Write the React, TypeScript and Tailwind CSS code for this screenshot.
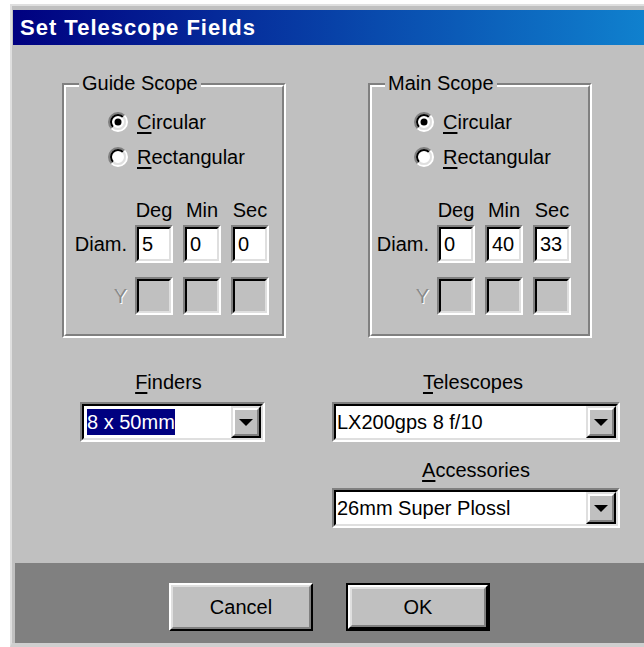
import React from "react";

function Radio({ checked }: { checked: boolean }) {
  return (
    <svg width="20" height="20" viewBox="0 0 20 20" className="shrink-0">
      <circle cx="10" cy="10" r="8" fill="#ffffff" />
      <path d="M3.636 16.364A9 9 0 0 1 16.364 3.636" fill="none" stroke="#808080" strokeWidth="2" />
      <path d="M16.364 3.636A9 9 0 0 1 3.636 16.364" fill="none" stroke="#ffffff" strokeWidth="2" />
      <path d="M5.05 14.95A7 7 0 0 1 14.95 5.05" fill="none" stroke="#000000" strokeWidth="2" />
      <path d="M14.95 5.05A7 7 0 0 1 5.05 14.95" fill="none" stroke="#dfdfdf" strokeWidth="2" />
      {checked && <circle cx="10" cy="10" r="3.5" fill="#000000" />}
    </svg>
  );
}

function Field({ value, disabled }: { value?: string; disabled?: boolean }) {
  return (
    <div className="w-[38px] h-[38px] border-2 border-t-[#808080] border-l-[#808080] border-r-white border-b-white">
      <div
        className={`h-full border-2 border-t-black border-l-black border-r-[#dfdfdf] border-b-[#dfdfdf] pl-[3px] leading-[30px] ${
          disabled ? "bg-[#c0c0c0]" : "bg-white"
        }`}
      >
        {value}
      </div>
    </div>
  );
}

function DropButton() {
  return (
    <div className="w-[30px] h-full shrink-0 border-2 border-t-[#dfdfdf] border-l-[#dfdfdf] border-r-black border-b-black">
      <div className="h-full flex items-center justify-center bg-[#c0c0c0] border-2 border-t-white border-l-white border-r-[#808080] border-b-[#808080]">
        <svg width="14" height="7" viewBox="0 0 14 7">
          <path d="M0 0H14L7 7Z" fill="#000000" />
        </svg>
      </div>
    </div>
  );
}

function Combo({ value, selected }: { value: string; selected?: boolean }) {
  return (
    <div className="h-[40px] border-2 border-t-[#808080] border-l-[#808080] border-r-white border-b-white">
      <div className="h-full flex bg-white border-2 border-t-black border-l-black border-r-[#dfdfdf] border-b-[#dfdfdf]">
        <div className={`flex-1 flex items-center ${selected ? "pl-[3px]" : "pl-[1px]"}`}>
          {selected ? (
            <span className="bg-[#000080] text-white leading-[26px]">{value}</span>
          ) : (
            <span>{value}</span>
          )}
        </div>
        <DropButton />
      </div>
    </div>
  );
}

function Underlined({ first, rest }: { first: string; rest: string }) {
  return (
    <span>
      <span className="underline decoration-2 underline-offset-[3px]">{first}</span>
      {rest}
    </span>
  );
}

function ScopeGroup({
  title,
  values,
  shift,
}: {
  title: string;
  values: string[];
  shift: "guide" | "main";
}) {
  return (
    <div className="relative w-[224px] h-[255px] border-2 border-t-[#808080] border-l-[#808080] border-r-white border-b-white">
      <div className="h-full pt-[20px] border-2 border-t-white border-l-white border-r-[#808080] border-b-[#808080]">
        <div className="flex items-center h-[30px] pl-[42px] gap-[9px]">
          <Radio checked />
          <Underlined first="C" rest="ircular" />
        </div>
        <div className="flex items-center h-[30px] mt-[5px] pl-[42px] gap-[9px]">
          <Radio checked={false} />
          <Underlined first="R" rest="ectangular" />
        </div>

        <div className={`mt-[26px] ${shift === "guide" ? "pl-[5px]" : "pl-[1px]"}`}>
          <div className="flex h-[24px]">
            <div className="w-[64px] shrink-0" />
            <div className="flex gap-[10px]">
              <div className="w-[38px] text-center">Deg</div>
              <div className="w-[38px] text-center">Min</div>
              <div className="w-[38px] text-center">Sec</div>
            </div>
          </div>
          <div className="flex items-center mt-[3px]">
            <div className="w-[64px] shrink-0 pr-[8px] text-right">Diam.</div>
            <div className="flex gap-[10px]">
              {values.map((v, i) => (
                <Field key={i} value={v} />
              ))}
            </div>
          </div>
          <div className="flex items-center mt-[14px]">
            <div className="w-[64px] shrink-0 pr-[8px] text-right text-[#8a8a8a] [text-shadow:1px_1px_0_#ffffff]">
              Y
            </div>
            <div className="flex gap-[10px]">
              <Field disabled />
              <Field disabled />
              <Field disabled />
            </div>
          </div>
        </div>
      </div>
      <span className="absolute -top-[14px] left-[15px] px-[3px] leading-[24px] bg-[#c0c0c0]">{title}</span>
    </div>
  );
}

function PushButton({ label, isDefault }: { label: string; isDefault?: boolean }) {
  return (
    <div className={`w-[144px] h-[48px] ${isDefault ? "border-2 border-black" : ""}`}>
      <div className="h-full border-2 border-t-white border-l-white border-r-black border-b-black">
        <div className="h-full flex items-center justify-center bg-[#c0c0c0] border-2 border-t-[#dfdfdf] border-l-[#dfdfdf] border-r-[#808080] border-b-[#808080]">
          {label}
        </div>
      </div>
    </div>
  );
}

export default function App() {
  return (
    <div className="w-[644px] h-[647px] overflow-hidden bg-white text-black font-['Liberation_Sans',Arial,sans-serif]">
      <div className="ml-[10px] mt-[4px] w-[650px] h-[643px] flex flex-col bg-[#c0c0c0] border-l-2 border-t-2 border-b-4 border-l-[#dfdfdf] border-t-[#dfdfdf] border-b-[#cfcfcf] pl-px pt-[4px]">
        {/* title bar */}
        <div className="h-[35px] shrink-0 flex items-center pl-[7px] text-white font-bold text-[22px] tracking-[1px] bg-[linear-gradient(to_right,#000080,#1084d0)]">
          Set Telescope Fields
        </div>

        {/* dialog body */}
        <div className="h-[518px] shrink-0 text-[20px] leading-[24px]">
          <div className="flex gap-[82px] ml-[49px] mt-[38px]">
            <ScopeGroup title="Guide Scope" values={["5", "0", "0"]} shift="guide" />
            <ScopeGroup title="Main Scope" values={["0", "40", "33"]} shift="main" />
          </div>

          <div className="flex gap-[67px] ml-[67px] mt-[32px]">
            <div className="w-[185px]">
              <div className="h-[24px] text-center pr-[8px]">
                <Underlined first="F" rest="inders" />
              </div>
              <div className="mt-[8px]">
                <Combo value="8 x 50mm" selected />
              </div>
            </div>
            <div className="w-[288px]">
              <div className="h-[24px] text-center pr-[6px]">
                <Underlined first="T" rest="elescopes" />
              </div>
              <div className="mt-[8px]">
                <Combo value="LX200gps 8 f/10" />
              </div>
              <div className="h-[24px] mt-[16px] text-center">
                <Underlined first="A" rest="ccessories" />
              </div>
              <div className="mt-[6px]">
                <Combo value="26mm Super Plossl" />
              </div>
            </div>
          </div>
        </div>

        {/* button strip */}
        <div className="h-[80px] shrink-0 ml-[2px] bg-[#808080] flex pt-[20px] pl-[154px] gap-[33px] text-[20px]">
          <PushButton label="Cancel" />
          <PushButton label="OK" isDefault />
        </div>
      </div>
    </div>
  );
}
